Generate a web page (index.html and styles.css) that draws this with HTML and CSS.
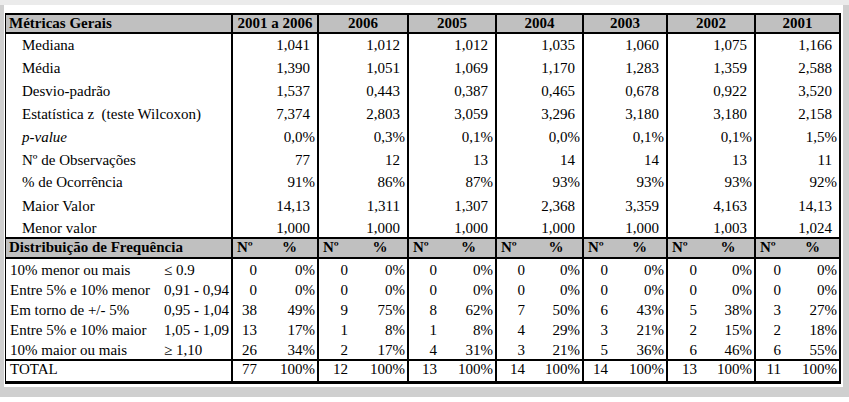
FILE: index.html
```html
<!DOCTYPE html>
<html lang="pt">
<head>
<meta charset="utf-8">
<title>Métricas Gerais</title>
<link rel="stylesheet" href="styles.css">
</head>
<body>
<div class="frame">
  <div class="sheet">
    <table class="grid">
      <colgroup>
        <col class="c-lab"><col class="c-rng">
        <col class="g1n"><col class="g1p">
        <col class="g2n"><col class="g2p">
        <col class="g3n"><col class="g3p">
        <col class="g4n"><col class="g4p">
        <col class="g5n"><col class="g5p">
        <col class="g6n"><col class="g6p">
        <col class="g7n"><col class="g7p">
      </colgroup>
      <thead>
        <tr class="head">
          <th colspan="2" class="lab">Métricas Gerais</th>
          <th colspan="2">2001 a 2006</th>
          <th colspan="2">2006</th>
          <th colspan="2">2005</th>
          <th colspan="2">2004</th>
          <th colspan="2">2003</th>
          <th colspan="2">2002</th>
          <th colspan="2">2001</th>
        </tr>
      </thead>
      <tbody>
        <tr class="m h20">
          <td colspan="2" class="ind">Mediana</td>
          <td colspan="2" class="n">1,041</td><td colspan="2" class="n">1,012</td><td colspan="2" class="n">1,012</td><td colspan="2" class="n">1,035</td><td colspan="2" class="n">1,060</td><td colspan="2" class="n">1,075</td><td colspan="2" class="n">1,166</td>
        </tr>
        <tr class="m h23">
          <td colspan="2" class="ind">Média</td>
          <td colspan="2" class="n">1,390</td><td colspan="2" class="n">1,051</td><td colspan="2" class="n">1,069</td><td colspan="2" class="n">1,170</td><td colspan="2" class="n">1,283</td><td colspan="2" class="n">1,359</td><td colspan="2" class="n">2,588</td>
        </tr>
        <tr class="m h23">
          <td colspan="2" class="ind">Desvio-padrão</td>
          <td colspan="2" class="n">1,537</td><td colspan="2" class="n">0,443</td><td colspan="2" class="n">0,387</td><td colspan="2" class="n">0,465</td><td colspan="2" class="n">0,678</td><td colspan="2" class="n">0,922</td><td colspan="2" class="n">3,520</td>
        </tr>
        <tr class="m h23">
          <td colspan="2" class="ind">Estatística z&nbsp; (teste Wilcoxon)</td>
          <td colspan="2" class="n">7,374</td><td colspan="2" class="n">2,803</td><td colspan="2" class="n">3,059</td><td colspan="2" class="n">3,296</td><td colspan="2" class="n">3,180</td><td colspan="2" class="n">3,180</td><td colspan="2" class="n">2,158</td>
        </tr>
        <tr class="m h23">
          <td colspan="2" class="ind"><em>p-value</em></td>
          <td colspan="2" class="p">0,0%</td><td colspan="2" class="p">0,3%</td><td colspan="2" class="p">0,1%</td><td colspan="2" class="p">0,0%</td><td colspan="2" class="p">0,1%</td><td colspan="2" class="p">0,1%</td><td colspan="2" class="p">1,5%</td>
        </tr>
        <tr class="m h23">
          <td colspan="2" class="ind">Nº de Observações</td>
          <td colspan="2" class="n">77</td><td colspan="2" class="n">12</td><td colspan="2" class="n">13</td><td colspan="2" class="n">14</td><td colspan="2" class="n">14</td><td colspan="2" class="n">13</td><td colspan="2" class="n">11</td>
        </tr>
        <tr class="m h22">
          <td colspan="2" class="ind">% de Ocorrência</td>
          <td colspan="2" class="p">91%</td><td colspan="2" class="p">86%</td><td colspan="2" class="p">87%</td><td colspan="2" class="p">93%</td><td colspan="2" class="p">93%</td><td colspan="2" class="p">93%</td><td colspan="2" class="p">92%</td>
        </tr>
        <tr class="m h24">
          <td colspan="2" class="ind">Maior Valor</td>
          <td colspan="2" class="n">14,13</td><td colspan="2" class="n">1,311</td><td colspan="2" class="n">1,307</td><td colspan="2" class="n">2,368</td><td colspan="2" class="n">3,359</td><td colspan="2" class="n">4,163</td><td colspan="2" class="n">14,13</td>
        </tr>
        <tr class="m h22">
          <td colspan="2" class="ind">Menor valor</td>
          <td colspan="2" class="n">1,000</td><td colspan="2" class="n">1,000</td><td colspan="2" class="n">1,000</td><td colspan="2" class="n">1,000</td><td colspan="2" class="n">1,000</td><td colspan="2" class="n">1,003</td><td colspan="2" class="n">1,024</td>
        </tr>
        <tr class="dhead">
          <th colspan="2" class="lab">Distribuição de Frequência</th>
          <th class="sn">Nº</th><th class="sp">%</th>
          <th class="sn">Nº</th><th class="sp">%</th>
          <th class="sn">Nº</th><th class="sp">%</th>
          <th class="sn">Nº</th><th class="sp">%</th>
          <th class="sn">Nº</th><th class="sp">%</th>
          <th class="sn">Nº</th><th class="sp">%</th>
          <th class="sn">Nº</th><th class="sp">%</th>
        </tr>
        <tr class="d">
          <td class="dl">10% menor ou mais</td><td class="rng">≤ 0.9</td>
          <td class="cn">0</td><td class="cp">0%</td><td class="cn">0</td><td class="cp">0%</td><td class="cn">0</td><td class="cp">0%</td><td class="cn">0</td><td class="cp">0%</td><td class="cn">0</td><td class="cp">0%</td><td class="cn">0</td><td class="cp">0%</td><td class="cn">0</td><td class="cp">0%</td>
        </tr>
        <tr class="d">
          <td class="dl">Entre 5% e 10% menor</td><td class="rng">0,91 - 0,94</td>
          <td class="cn">0</td><td class="cp">0%</td><td class="cn">0</td><td class="cp">0%</td><td class="cn">0</td><td class="cp">0%</td><td class="cn">0</td><td class="cp">0%</td><td class="cn">0</td><td class="cp">0%</td><td class="cn">0</td><td class="cp">0%</td><td class="cn">0</td><td class="cp">0%</td>
        </tr>
        <tr class="d">
          <td class="dl">Em torno de +/- 5%</td><td class="rng">0,95 - 1,04</td>
          <td class="cn">38</td><td class="cp">49%</td><td class="cn">9</td><td class="cp">75%</td><td class="cn">8</td><td class="cp">62%</td><td class="cn">7</td><td class="cp">50%</td><td class="cn">6</td><td class="cp">43%</td><td class="cn">5</td><td class="cp">38%</td><td class="cn">3</td><td class="cp">27%</td>
        </tr>
        <tr class="d">
          <td class="dl">Entre 5% e 10% maior</td><td class="rng">1,05 - 1,09</td>
          <td class="cn">13</td><td class="cp">17%</td><td class="cn">1</td><td class="cp">8%</td><td class="cn">1</td><td class="cp">8%</td><td class="cn">4</td><td class="cp">29%</td><td class="cn">3</td><td class="cp">21%</td><td class="cn">2</td><td class="cp">15%</td><td class="cn">2</td><td class="cp">18%</td>
        </tr>
        <tr class="d">
          <td class="dl">10% maior ou mais</td><td class="rng">≥ 1,10</td>
          <td class="cn">26</td><td class="cp">34%</td><td class="cn">2</td><td class="cp">17%</td><td class="cn">4</td><td class="cp">31%</td><td class="cn">3</td><td class="cp">21%</td><td class="cn">5</td><td class="cp">36%</td><td class="cn">6</td><td class="cp">46%</td><td class="cn">6</td><td class="cp">55%</td>
        </tr>
        <tr class="d tot">
          <td class="dl">TOTAL</td><td class="rng"></td>
          <td class="cn">77</td><td class="cp">100%</td><td class="cn">12</td><td class="cp">100%</td><td class="cn">13</td><td class="cp">100%</td><td class="cn">14</td><td class="cp">100%</td><td class="cn">14</td><td class="cp">100%</td><td class="cn">13</td><td class="cp">100%</td><td class="cn">11</td><td class="cp">100%</td>
        </tr>
      </tbody>
    </table>
  </div>
</div>
</body>
</html>
```

FILE: styles.css
```css
html, body {
  margin: 0;
  padding: 0;
  background: #ffffff;
}

.frame {
  width: 839px;
  padding: 0 6px 10px 4px;
  border-top: 5px solid #ebebeb;
  background: #cfcfcf;
}

.sheet {
  background: #ffffff;
  padding: 8px 2px 3px 1px;
}

.grid {
  width: 836px;
  table-layout: fixed;
  border-collapse: separate;
  border-spacing: 0;
  border-top: 2px solid #000;
  border-left: 1px solid #000;
  border-bottom: 3px solid #000;
  font-family: "Liberation Serif", "Times New Roman", serif;
  font-size: 15px;
  line-height: 17px;
  color: #000;
}

.c-lab { width: 157px; }
.c-rng { width: 70px; }
.g1n { width: 29px; } .g1p { width: 57px; }
.g2n { width: 34px; } .g2p { width: 56px; }
.g3n { width: 33px; } .g3p { width: 55px; }
.g4n { width: 33px; } .g4p { width: 54px; }
.g5n { width: 29px; } .g5p { width: 55px; }
.g6n { width: 34px; } .g6p { width: 54px; }
.g7n { width: 30px; } .g7p { width: 55px; }

.grid th,
.grid td {
  padding: 0;
  white-space: nowrap;
  overflow: hidden;
}

/* header row */
.head { height: 19px; }
.head th {
  background: #c0c0c0;
  font-weight: bold;
  text-align: center;
  vertical-align: middle;
  border-right: 2px solid #000;
  border-bottom: 2px solid #000;
}
.head th.lab,
.dhead th.lab {
  text-align: left;
  padding-left: 3px;
}

/* top metric rows */
.h20 { height: 20px; }
.h22 { height: 22px; }
.h23 { height: 23px; }
.h24 { height: 24px; }

.m td {
  vertical-align: bottom;
  border-right: 2px solid #000;
}
.m td.ind { padding-left: 16px; }
.m td.n { text-align: right; padding-right: 7px; }
.m td.p { text-align: right; padding-right: 2px; }
.m em { font-style: italic; }

/* distribution header */
.dhead { height: 22px; }
.dhead th {
  background: #c0c0c0;
  font-weight: bold;
  vertical-align: top;
  border-top: 2px solid #000;
  border-bottom: 2px solid #000;
}
.dhead th.lab { border-right: 2px solid #000; }
.dhead th.sn { text-align: left; padding-left: 4px; }
.dhead th.sp { text-align: center; border-right: 2px solid #000; }

/* distribution rows */
.d { height: 20px; }
.d td { vertical-align: bottom; }
.d td.dl { padding-left: 4px; }
.d td.rng { padding-left: 1px; border-right: 2px solid #000; }
.d td.cn { text-align: right; padding-right: 5px; }
.d td.cp { text-align: right; padding-right: 2px; border-right: 2px solid #000; }

.d.tot { height: 22px; }
.d.tot td {
  border-top: 2px solid #000;
  padding-bottom: 3px;
}
```
